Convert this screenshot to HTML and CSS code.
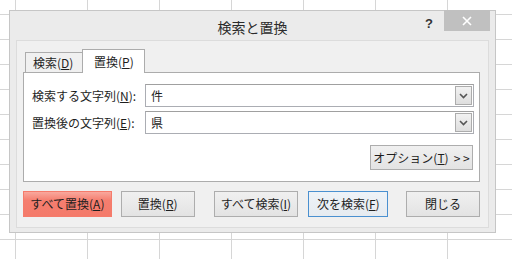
FILE: index.html
```html
<!DOCTYPE html>
<html lang="ja">
<head>
<meta charset="utf-8">
<link rel="stylesheet" href="styles.css">
</head>
<body>
<div class="dialog">
  <div class="titlebar">
    <div></div>
    <div class="title">検索と置換</div>
    <div class="controls">
      <span class="help">?</span>
      <span class="close"><svg width="10" height="10" viewBox="0 0 10 10"><path d="M1 1 L9 9 M9 1 L1 9" stroke="#fff" stroke-width="1.6"/></svg></span>
    </div>
  </div>
  <div class="inner">
    <div class="tabs">
      <div class="tab">検索(<u>D</u>)</div>
      <div class="tab active">置換(<u>P</u>)</div>
    </div>
    <div class="panel">
      <div class="row">
        <span class="label">検索する文字列(<u>N</u>):</span>
        <div class="combo"><span class="value">件</span><span class="drop"><svg width="9" height="6" viewBox="0 0 9 6"><path d="M1 1 L4.5 4.5 L8 1" fill="none" stroke="#555" stroke-width="1.6"/></svg></span></div>
      </div>
      <div class="row">
        <span class="label">置換後の文字列(<u>E</u>):</span>
        <div class="combo"><span class="value">県</span><span class="drop"><svg width="9" height="6" viewBox="0 0 9 6"><path d="M1 1 L4.5 4.5 L8 1" fill="none" stroke="#555" stroke-width="1.6"/></svg></span></div>
      </div>
      <div class="optrow">
        <div class="btn opt">オプション(<u>T</u>)<span class="arrows">&gt; &gt;</span></div>
      </div>
    </div>
    <div class="buttons">
      <div class="btn all">すべて置換(<u>A</u>)</div>
      <div class="btn rep">置換(<u>R</u>)</div>
      <div class="btn findall">すべて検索(<u>I</u>)</div>
      <div class="btn next">次を検索(<u>F</u>)</div>
      <div class="btn closebtn">閉じる</div>
    </div>
  </div>
</div>
</body>
</html>
```
FILE: styles.css
```css
html {
  background-color: #fff;
  background-image: linear-gradient(to right, #d6d6d6 1px, transparent 1px), linear-gradient(to bottom, #d6d6d6 1px, transparent 1px);
  background-size: 72px 25px;
  background-position: 15px 14px;
}
body {
  margin: 0;
  width: 512px;
  height: 259px;
  overflow: hidden;
  font-family: "Noto Sans CJK JP", "Noto Sans", sans-serif;
  font-size: 12px;
  color: #1e1e1e;
}
u { text-decoration: underline; text-underline-offset: 1px; }
.dialog {
  margin: 10px 0 0 9px;
  width: 487px;
  height: 223px;
  box-sizing: border-box;
  border: 1px solid #c6c6c6;
  background: #ebebeb;
  display: flex;
  flex-direction: column;
}
.titlebar {
  height: 29px;
  display: grid;
  grid-template-columns: 1fr auto 1fr;
}
.title {
  font-size: 14px;
  line-height: 16px;
  padding-top: 8px;
  color: #2b2b2b;
}
.controls {
  display: flex;
  justify-content: flex-end;
  align-items: flex-start;
}
.help {
  font-family: "Liberation Sans", sans-serif;
  font-weight: bold;
  font-size: 13px;
  line-height: 13px;
  color: #333;
  margin-top: 6px;
  margin-right: 11px;
}
.close {
  width: 46px;
  height: 21px;
  margin-top: -1px;
  margin-right: 5px;
  background: #c0c0c0;
  display: flex;
  align-items: center;
  justify-content: center;
}
.inner {
  flex: 1;
  margin: 0 6px 4px;
  background: #f0f0f0;
  border: 1px solid #dcdcdc;
  padding: 8px 8px 10px 6px;
  display: flex;
  flex-direction: column;
}
.tabs {
  display: flex;
  align-items: flex-end;
  height: 23px;
  margin-left: 2px;
  position: relative;
  z-index: 1;
}
.tab {
  height: 20px;
  box-sizing: border-box;
  padding: 0 0 0 7px;
  width: 58px;
  border: 1px solid #acacac;
  border-bottom: none;
  background: #f0f0f0;
  line-height: 19px;
  font-size: 12px;
  white-space: nowrap;
}
.tab.active {
  height: 24px;
  width: 63px;
  margin-left: -1px;
  margin-bottom: -1px;
  background: #fff;
  padding: 2px 0 0 11px;
}
.panel {
  height: 110px;
  box-sizing: border-box;
  background: #fff;
  border: 1px solid #acacac;
  padding: 11px 5px 0 8px;
  display: flex;
  flex-direction: column;
  gap: 4px;
}
.row {
  display: flex;
  align-items: center;
  height: 23px;
}
.label {
  width: 113px;
  white-space: nowrap;
  line-height: 16px;
}
.combo {
  flex: 1;
  height: 23px;
  box-sizing: border-box;
  border: 1px solid #abadb3;
  border-top-color: #a0a0a0;
  background: #fff;
  display: flex;
  align-items: stretch;
  padding: 1px;
}
.value {
  flex: 1;
  padding-left: 4px;
  line-height: 19px;
}
.drop {
  width: 17px;
  box-sizing: border-box;
  border: 1px solid #acacac;
  background: linear-gradient(#f2f2f2, #dedede);
  display: flex;
  align-items: center;
  justify-content: center;
}
.optrow {
  display: flex;
  justify-content: flex-end;
  margin-top: 7px;
  padding-right: 1px;
}
.btn {
  height: 26px;
  box-sizing: border-box;
  border: 1px solid #adadad;
  background: linear-gradient(#f0f0f0, #e3e3e3);
  display: flex;
  align-items: center;
  justify-content: center;
  white-space: nowrap;
  line-height: 16px;
}
.opt {
  width: 103px;
  height: 25px;
}
.arrows {
  margin-left: 5px;
  font-size: 12px;
}
.buttons {
  margin-top: 9px;
  display: flex;
}
.all {
  width: 89px;
  background: linear-gradient(#f9a89d, #f57e6f 35%, #f47a6a);
  border-color: #f57b6b;
}
.rep { width: 74px; margin-left: 9px; }
.findall { width: 85px; margin-left: 19px; }
.next {
  width: 80px;
  margin-left: 10px;
  border-color: #4a90d0;
  background: linear-gradient(#eef3f8, #e6ebf0);
}
.closebtn { width: 74px; margin-left: 18px; }
```
